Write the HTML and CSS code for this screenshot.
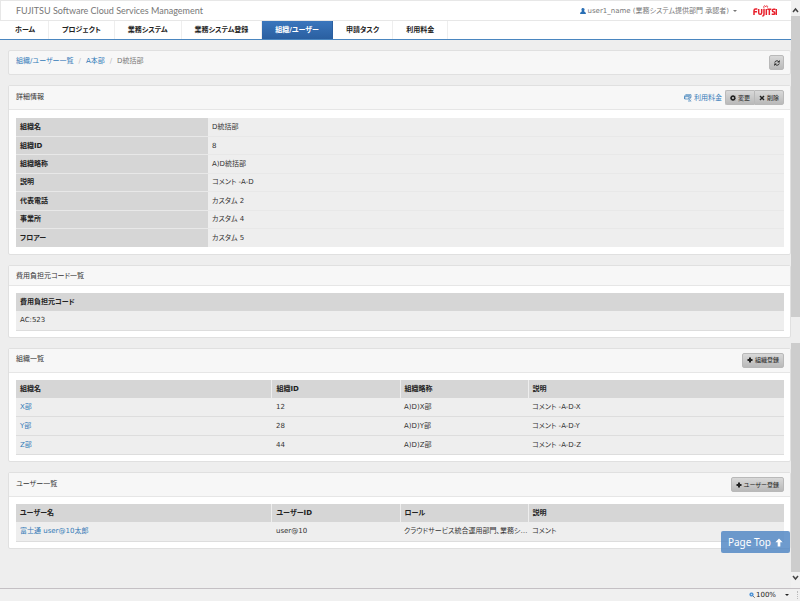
FILE: index.html
```html
<!DOCTYPE html>
<html lang="ja">
<head>
<meta charset="utf-8">
<meta name="viewport" content="width=device-width, initial-scale=1">
<title>FUJITSU Software Cloud Services Management</title>
<link rel="stylesheet" href="styles.css">
</head>
<body>
<div class="viewport">
  <div class="page" id="top">
    <header class="header">
      <a class="brand" href="#top">FUJITSU Software Cloud Services Management</a>
      <button class="user" type="button">
        <svg class="icon user-icon" viewBox="0 0 12 12" aria-hidden="true"><path d="M6 0c2 0 3.200 1.500 3.200 3.200S8.200 6 7.800 6.500c.3.700 4 .8 4.200 5.500H0c.2-4.700 3.900-4.800 4.200-5.500C3.800 6 2.800 5 2.800 3.200S4 0 6 0z"/></svg>
        <span>user1_name (業務システム提供部門 承認者)</span>
        <span class="caret"></span>
      </button>
      <svg class="logo" viewBox="0 0 72 36" role="img" aria-label="FUJITSU"><g fill="none" stroke="#e8202c" stroke-width="4.500"><path d="M3 30V17q0-5 5-5h5M3 20h9M17 12v11q0 5 4.500 5t4.500-5V12M33 11v16q0 6-5 6M40 12v18M49 30V13M43 13h12M67 13h-5q-4 0-4 3.500t4 4q3 0 3 4T61 28h-5M70 12v18"/><path stroke-width="2.500" d="M33 9c-3-8 4-9 5-3 2-6 8-4 5 2"/></g></svg>
    </header>
    <nav class="nav">
      <a class="home" href="#">ホーム</a>
      <a href="#">プロジェクト</a>
      <a href="#">業務システム</a>
      <a href="#">業務システム登録</a>
      <a class="active" href="#">組織/ユーザー</a>
      <a href="#">申請タスク</a>
      <a href="#">利用料金</a>
    </nav>
    <main class="content">
      <div class="panel crumbs">
        <ol>
          <li><a href="#">組織/ユーザー一覧</a></li>
          <li><a href="#">A本部</a></li>
          <li>D統括部</li>
        </ol>
        <button class="btn square" type="button" aria-label="更新"><svg class="icon" viewBox="0 0 12 12" aria-hidden="true"><path fill="none" stroke="currentColor" stroke-width="2" d="M1.500 5a4.500 4.500 0 0 1 8-1.500M10.500 7a4.500 4.500 0 0 1-8 1.500"/><path d="M11.500 0v5h-5zM.5 12V7h5z"/></svg></button>
      </div>

      <section class="panel">
        <div class="heading tall">
          <h2>詳細情報</h2>
          <div class="tools">
            <a class="fee" href="#"><svg class="fee-icon" viewBox="0 0 24 24" aria-hidden="true"><g fill="none" stroke="currentColor" stroke-width="2"><path d="M2 15V6l3-4h16v9h-4M2 8h13v7H2zM5 5h13v6"/><path d="M14 14l7 8M12 21h8M18 13l3 3"/></g></svg>利用料金</a>
            <div class="group">
              <button class="btn" type="button"><svg class="icon" viewBox="0 0 12 12" aria-hidden="true"><path fill-rule="evenodd" d="M5 0h2l.4 1.700 1 .4L10 1.200 11 2.600 10 4l.4 1 1.600.3v1.700l-1.700.4-.4 1L11 10l-1.300 1.200-1.400-1-1 .4L7 12H5l-.3-1.600-1-.4-1.400 1L1 9.700l.9-1.400-.4-1L0 7V5l1.600-.3.4-1L1 2.300 2.300 1l1.400 1 1-.4zM6 3.800a2.200 2.200 0 1 0 0 4.400 2.200 2.200 0 0 0 0-4.400z"/></svg>変更</button>
              <button class="btn" type="button"><svg class="icon" viewBox="0 0 12 12" aria-hidden="true"><path d="M1 3l2-2 3 3 3-3 2 2-3 3 3 3-2 2-3-3-3 3-2-2 3-3z"/></svg>削除</button>
            </div>
          </div>
        </div>
        <div class="body roomy">
          <table class="details">
            <tbody>
              <tr><th scope="row">組織名</th><td>D統括部</td></tr>
              <tr><th scope="row">組織ID</th><td>8</td></tr>
              <tr><th scope="row">組織略称</th><td>A)D統括部</td></tr>
              <tr><th scope="row">説明</th><td>コメント -A-D</td></tr>
              <tr><th scope="row">代表電話</th><td>カスタム 2</td></tr>
              <tr><th scope="row">事業所</th><td>カスタム 4</td></tr>
              <tr><th scope="row">フロアー</th><td>カスタム 5</td></tr>
            </tbody>
          </table>
        </div>
      </section>

      <section class="panel">
        <div class="heading"><h2>費用負担元コード一覧</h2></div>
        <div class="body">
          <table class="list">
            <thead><tr><th scope="col">費用負担元コード</th></tr></thead>
            <tbody><tr><td>AC:523</td></tr></tbody>
          </table>
        </div>
      </section>

      <section class="panel">
        <div class="heading tall">
          <h2>組織一覧</h2>
          <button class="btn" type="button"><svg class="icon" viewBox="0 0 12 12" aria-hidden="true"><path d="M4 1h4v3h3v4H8v3H4V8H1V4h3z"/></svg>組織登録</button>
        </div>
        <div class="body">
          <table class="list">
            <colgroup><col class="wide"><col><col><col class="wide"></colgroup>
            <thead><tr><th scope="col">組織名</th><th scope="col">組織ID</th><th scope="col">組織略称</th><th scope="col">説明</th></tr></thead>
            <tbody>
              <tr><td><a href="#">X部</a></td><td>12</td><td>A)D)X部</td><td>コメント -A-D-X</td></tr>
              <tr><td><a href="#">Y部</a></td><td>28</td><td>A)D)Y部</td><td>コメント -A-D-Y</td></tr>
              <tr><td><a href="#">Z部</a></td><td>44</td><td>A)D)Z部</td><td>コメント -A-D-Z</td></tr>
            </tbody>
          </table>
        </div>
      </section>

      <section class="panel">
        <div class="heading tall">
          <h2>ユーザー一覧</h2>
          <button class="btn" type="button"><svg class="icon" viewBox="0 0 12 12" aria-hidden="true"><path d="M4 1h4v3h3v4H8v3H4V8H1V4h3z"/></svg>ユーザー登録</button>
        </div>
        <div class="body">
          <table class="list">
            <colgroup><col class="wide"><col><col><col class="wide"></colgroup>
            <thead><tr><th scope="col">ユーザー名</th><th scope="col">ユーザーID</th><th scope="col">ロール</th><th scope="col">説明</th></tr></thead>
            <tbody><tr><td><a href="#">富士通 user@10太郎</a></td><td>user@10</td><td>クラウドサービス統合運用部門、業務シ…</td><td>コメント</td></tr></tbody>
          </table>
        </div>
      </section>
    </main>
    <a class="page-top" href="#top">Page Top <svg viewBox="0 0 12 12" aria-hidden="true"><path d="M6 0l5.500 5.500H8V12H4V5.500H.5z"/></svg></a>
  </div>
  <div class="scrollbar" aria-hidden="true">
    <svg class="arrow" viewBox="0 0 9 16"><path d="M2 12l2.500-3L7 12"/></svg>
    <div class="thumb"></div>
    <div class="gap"></div>
    <div class="thumb lower"></div>
    <svg class="arrow" viewBox="0 0 9 16"><path d="M2 4l2.500 3L7 4"/></svg>
  </div>
</div>
<footer class="status">
  <svg class="zoom-icon" viewBox="0 0 12 12" aria-hidden="true"><path stroke="#777" stroke-width="2" d="M7 7l4.500 4.500"/><circle cx="5" cy="5" r="4" fill="#2678c8" stroke="#9bc3e8"/><path stroke="#fff" d="M3 5h4M5 3v4"/></svg>
  <span>100%</span>
  <span class="caret"></span>
  <span class="grip"></span>
</footer>
</body>
</html>
```
FILE: styles.css
```css
* { box-sizing: border-box; }

body {
  margin: 0;
  height: 100vh;
  display: flex;
  flex-direction: column;
  background: #eee;
  color: #333;
  font: 7px/10px "DejaVu Sans", "Noto Sans CJK JP", sans-serif;
  font-feature-settings: "palt";
}

a { color: #337ab7; text-decoration: none; }
button { font: inherit; font-feature-settings: inherit; color: inherit; cursor: pointer; }
h2 { margin: 0; font: inherit; }
.icon { width: 6px; height: 6px; fill: currentColor; flex: none; }

.viewport { flex: 1; min-height: 0; display: flex; }
.page { flex: 1; min-width: 0; position: relative; overflow: hidden; }

.header {
  display: flex;
  align-items: center;
  height: 21px;
  padding: 0 14px 0 15px;
  background: #fff;
  border: 1px solid #e7e7e7;
  border-right: 0;
}
.brand {
  margin-right: auto;
  color: #777;
  font-family: Lato, "Noto Sans CJK JP", sans-serif;
  font-size: 9px;
}
.user {
  display: flex;
  align-items: center;
  gap: 2px;
  padding: 0;
  border: 0;
  background: none;
  color: #777;
}
.user-icon { color: #2a6fb5; }
.caret {
  margin-left: 2px;
  border: 2px solid transparent;
  border-top-color: currentColor;
  border-bottom: 0;
}
.logo { width: 24px; height: 12px; margin-left: 16px; }

.nav {
  display: flex;
  height: 19px;
  background: #fff;
  border-bottom: 1px solid #4a86c0;
}
.nav a {
  display: flex;
  align-items: center;
  padding: 0 13px;
  border-right: 1px solid #eee;
  color: #222;
  font-weight: bold;
}
.nav .home { padding-left: 15px; }
.nav .active {
  background: linear-gradient(#3a76bd, #2a5fa0);
  border-color: #2a5fa0;
  color: #fff;
}

.content {
  display: flex;
  flex-direction: column;
  gap: 10px;
  padding: 10px 0 0 8px;
}
.panel {
  background: #fff;
  border: 1px solid #e0e0e0;
  border-radius: 2px;
}
.crumbs {
  display: flex;
  align-items: center;
  justify-content: space-between;
  height: 25px;
  padding: 0 6px 0 7px;
  background: #f7f7f7;
}
.crumbs ol {
  display: flex;
  margin: 0;
  padding: 0 0 4px;
  list-style: none;
  color: #777;
}
.crumbs li + li::before { content: "/"; padding: 0 5px; color: #bbb; }

.heading {
  display: flex;
  align-items: center;
  justify-content: space-between;
  height: 20px;
  padding: 0 6px 0 7px;
  background: #f7f7f7;
  border-bottom: 1px solid #e6e6e6;
}
.tall { height: 24px; }
.tall h2 { padding-bottom: 2px; }
.tools, .group { display: flex; align-items: center; }
.tools { gap: 3px; }
.fee { display: flex; align-items: center; gap: 2px; }
.fee-icon { width: 8px; height: 8px; }

.btn {
  display: flex;
  align-items: center;
  gap: 2px;
  height: 15px;
  padding: 0 4px;
  border: 1px solid #b9b9b9;
  border-radius: 2px;
  background: linear-gradient(#d9d9d9, #b9b9b9);
  font-size: 6px;
  color: #222;
}
.square { width: 15px; justify-content: center; }
.group .btn:first-child { border-radius: 2px 0 0 2px; border-right: 0; }
.group .btn:last-child { border-radius: 0 2px 2px 0; }

.body { padding: 7px 6px 6px 7px; }
.roomy { padding: 8px 6px 7px 7px; }
table { width: 100%; border-collapse: collapse; table-layout: fixed; }
th, td {
  height: 18px;
  padding: 0 0 0 4px;
  text-align: left;
  vertical-align: middle;
  white-space: nowrap;
  overflow: hidden;
  text-overflow: ellipsis;
}
th { background: #d6d6d6; color: #222; }
td { background: #eee; }
.details { height: 129px; }
.details th { width: 25%; }
.details tr + tr > * { border-top: 1px solid #e8e8e8; }
.list th + th { border-left: 1px solid #eee; }
.list td { height: 19px; border-bottom: 1px solid #ddd; }
.wide { width: 33.333%; }

.page-top {
  position: absolute;
  right: 1px;
  bottom: 35px;
  display: flex;
  align-items: center;
  gap: 4px;
  height: 22px;
  padding: 0 7px;
  border-radius: 2px;
  background: rgba(74, 130, 194, 0.8);
  color: #fff;
  font: 10px/12px "Noto Sans", sans-serif;
}
.page-top svg { width: 8px; height: 9px; fill: currentColor; }

.scrollbar {
  display: flex;
  flex-direction: column;
  width: 9px;
  background: #f0f0f0;
}
.arrow { width: 9px; height: 16px; fill: none; stroke: #444; stroke-width: 1.5; }
.thumb { flex: 300; background: #cdcdcd; }
.gap { flex: 26; background: #eee; }
.lower { flex: 229; }

.status {
  display: flex;
  align-items: center;
  justify-content: flex-end;
  gap: 1px;
  height: 13px;
  padding-right: 2px;
  border-top: 1px solid #c4c0c4;
  background: #f0f0f0;
  color: #222;
}
.zoom-icon { width: 6px; height: 6px; fill: none; }
.status .caret { margin: 0 4px 0 8px; }
.grip { width: 4px; height: 8px; border-right: 1px dotted #bbb; }
```
